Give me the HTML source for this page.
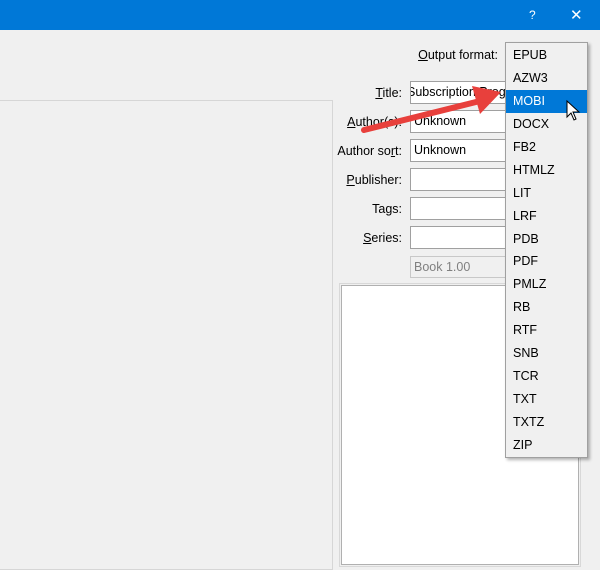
<!DOCTYPE html>
<html><head><style>
body{margin:0;width:600px;height:557px;background:#f0f0f0;position:relative;overflow:hidden;font-family:"Liberation Sans",sans-serif;font-size:12.5px;color:#000}
.tb{position:absolute;left:0;top:0;width:600px;height:30px;background:#0078d7;color:#fff}
.lbl{position:absolute;right:198px;width:120px;text-align:right}
.in{position:absolute;left:410px;width:100px;height:23px;background:#fff;border:1px solid #a0a0a0;box-sizing:border-box;padding-left:3px;line-height:21px;overflow:hidden;white-space:nowrap}
.dd{position:absolute;left:505px;top:42px;width:83px;height:416px;background:#f0f0f0;border:1px solid #a0a0a0;box-sizing:border-box;box-shadow:2px 2px 3px rgba(0,0,0,.3);padding-top:1px}
.it{height:22.94px;line-height:22.94px;padding-left:7px}
.sel{background:#0078d7;color:#fff}
u{text-decoration:underline}
</style></head><body>
<div class="tb"><span style="position:absolute;left:529px;top:8px;font-size:12px">?</span><span style="position:absolute;left:570px;top:6px;font-size:15px">✕</span></div>
<div style="position:absolute;left:-1px;top:100px;width:334px;height:470px;border:1px solid #d6d6d6;box-sizing:border-box"></div>
<div class="lbl" style="top:48px;right:102px"><u>O</u>utput format:</div>
<div class="lbl" style="top:86px"><u>T</u>itle:</div>
<div class="lbl" style="top:115px"><u>A</u>uthor(s):</div>
<div class="lbl" style="top:144px">Author so<u>r</u>t:</div>
<div class="lbl" style="top:173px"><u>P</u>ublisher:</div>
<div class="lbl" style="top:202px">Ta<u>g</u>s:</div>
<div class="lbl" style="top:231px"><u>S</u>eries:</div>
<div class="in" style="top:81px;padding-left:0;text-indent:-4px">Subscription Program</div>
<div class="in" style="top:110px">Unknown</div>
<div class="in" style="top:139px">Unknown</div>
<div class="in" style="top:168px"></div>
<div class="in" style="top:197px"></div>
<div class="in" style="top:226px"></div>
<div class="in" style="top:256px;height:22px;background:#f0f0f0;border-color:#c8c8c8;color:#808080">Book 1.00</div>
<div style="position:absolute;left:341px;top:285px;width:238px;height:280px;border:1px solid #b0b0b0;outline:1px solid #d8d8d8;outline-offset:1px;background:#fff;box-sizing:border-box"></div>
<div class="dd">
<div class="it">EPUB</div><div class="it">AZW3</div><div class="it sel">MOBI</div><div class="it">DOCX</div><div class="it">FB2</div><div class="it">HTMLZ</div><div class="it">LIT</div><div class="it">LRF</div><div class="it">PDB</div><div class="it">PDF</div><div class="it">PMLZ</div><div class="it">RB</div><div class="it">RTF</div><div class="it">SNB</div><div class="it">TCR</div><div class="it">TXT</div><div class="it">TXTZ</div><div class="it">ZIP</div>
</div>
<svg style="position:absolute;left:0;top:0" width="600" height="557">
<line x1="364" y1="130" x2="480" y2="101" stroke="#e8403c" stroke-width="6" stroke-linecap="round"/>
<polygon points="501,92 472,86 480,114" fill="#e8403c"/>
<path d="M567,101 L567,117 L571,113 L574,120 L576,119 L573,112 L579,112 Z" fill="#fff" stroke="#000" stroke-width="1"/>
</svg>
</body></html>
